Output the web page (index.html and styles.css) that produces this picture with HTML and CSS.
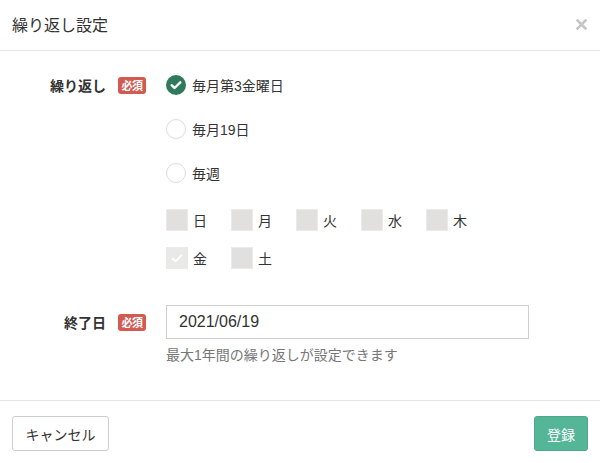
FILE: index.html
```html
<!DOCTYPE html>
<html lang="ja">
<head>
<meta charset="utf-8">
<title>繰り返し設定</title>
<link rel="stylesheet" href="styles.css">
</head>
<body>
<div class="modal">
  <div class="modal-header">
    <h1 class="modal-title">繰り返し設定</h1>
    <button class="close" aria-label="閉じる">
      <svg width="11" height="11" viewBox="0 0 11 11"><path d="M1.5 1.5 L9.5 9.5 M9.5 1.5 L1.5 9.5" stroke="#c6c6c6" stroke-width="2.6" stroke-linecap="square" fill="none"/></svg>
    </button>
  </div>
  <div class="modal-body">
    <div class="form-row repeat-row">
      <div class="label-cell label-top"><span class="label-text">繰り返し</span><span class="badge">必須</span></div>
      <div class="control-cell">
        <div class="radio-row">
          <span class="radio checked">
            <svg width="20" height="20" viewBox="0 0 20 20"><circle cx="10" cy="10" r="10" fill="#2f7a5b"/><path d="M5.6 10.2 L8.6 13 L14.3 7.3" stroke="#fff" stroke-width="2.4" fill="none" stroke-linecap="round" stroke-linejoin="round"/></svg>
          </span>
          <span class="opt-text">毎月第3金曜日</span>
        </div>
        <div class="radio-row">
          <span class="radio"></span>
          <span class="opt-text">毎月19日</span>
        </div>
        <div class="radio-row">
          <span class="radio"></span>
          <span class="opt-text">毎週</span>
        </div>
        <div class="days">
          <div class="day-line">
            <label class="day"><span class="box"></span><span>日</span></label>
            <label class="day"><span class="box"></span><span>月</span></label>
            <label class="day"><span class="box"></span><span>火</span></label>
            <label class="day"><span class="box"></span><span>水</span></label>
            <label class="day"><span class="box"></span><span>木</span></label>
          </div>
          <div class="day-line">
            <label class="day"><span class="box checked"><svg width="22" height="22" viewBox="0 0 22 22"><path d="M6.5 11.5 L9.6 14.3 L15.5 8.4" stroke="#fff" stroke-width="1.8" fill="none" stroke-linecap="round" stroke-linejoin="round"/></svg></span><span>金</span></label>
            <label class="day"><span class="box"></span><span>土</span></label>
          </div>
        </div>
      </div>
    </div>
    <div class="form-row end-row">
      <div class="label-cell label-mid"><span class="label-text">終了日</span><span class="badge">必須</span></div>
      <div class="control-cell">
        <input class="date-input" type="text" value="2021/06/19">
        <p class="help">最大1年間の繰り返しが設定できます</p>
      </div>
    </div>
  </div>
  <div class="modal-footer">
    <button class="btn btn-default">キャンセル</button>
    <button class="btn btn-primary">登録</button>
  </div>
</div>
</body>
</html>
```
FILE: styles.css
```css
* { box-sizing: border-box; }
html, body { margin: 0; padding: 0; background: #fff; }
body {
  font-family: "Liberation Sans", "Noto Sans CJK JP", sans-serif;
  color: #333;
  font-size: 14px;
  width: 600px;
  height: 463px;
  overflow: hidden;
}
.modal { width: 600px; height: 463px; display: flex; flex-direction: column; }
.modal-header {
  height: 51px;
  border-bottom: 1px solid #e5e5e5;
  display: flex;
  align-items: center;
  justify-content: space-between;
  padding: 2px 13px 0 12px;
}
.modal-title { margin: 0; font-size: 16px; font-weight: normal; line-height: 20px; color: #333; }
.close { border: 0; background: none; padding: 0; margin: 0 0 3px 0; display: flex; cursor: pointer; }

.modal-body { height: 350px; border-bottom: 1px solid #e5e5e5; padding-top: 12px; }
.form-row { display: flex; }
.label-cell {
  width: 146px;
  margin-right: 20px;
  display: flex;
  justify-content: flex-end;
  align-items: center;
}
.label-top { height: 44px; }
.label-mid { height: 34px; }
.label-text { font-weight: bold; font-size: 14px; color: #333; margin-right: 12px; }
.badge {
  display: inline-flex;
  align-items: center;
  justify-content: center;
  width: 28px;
  height: 17px;
  background: #d25a50;
  color: #fff;
  font-size: 11px;
  font-weight: bold;
  border-radius: 3px;
  letter-spacing: -0.5px;
}
.control-cell { flex: 1; }
.radio-row { height: 44px; display: flex; align-items: center; }
.radio {
  width: 20px; height: 20px; border-radius: 50%;
  border: 1.5px solid #dcdcd6;
  background: #fff;
  margin-right: 6px;
  display: inline-flex;
}
.radio.checked { border: 0; }
.opt-text { font-size: 14px; color: #333; }
.days { margin-top: 14px; }
.day-line { display: flex; height: 22px; margin-bottom: 16px; }
.day-line:last-child { margin-bottom: 0; }
.day { width: 65px; display: flex; align-items: center; font-size: 14px; color: #333; }
.box {
  width: 22px; height: 22px;
  background: #e1e0df;
  border: 1px solid #eaeaea;
  margin-right: 5px;
  display: inline-flex;
}
.box.checked { background: #e9e9e7; border: 0; }
.end-row { margin-top: 36px; }
.date-input {
  display: block;
  width: 363px; height: 34px;
  border: 1px solid #cfcfcf;
  padding: 0 12px;
  font-family: "Liberation Sans", "Noto Sans CJK JP", sans-serif;
  font-size: 16px;
  color: #333;
  outline: none;
}
.help { margin: 6px 0 0; font-size: 14px; line-height: 20px; color: #777; }

.modal-footer {
  flex: 1;
  display: flex;
  justify-content: space-between;
  align-items: flex-start;
  padding: 15px 12px 0 12px;
}
.btn {
  height: 35px;
  font-family: "Liberation Sans", "Noto Sans CJK JP", sans-serif;
  font-size: 14px;
  border-radius: 3px;
  padding: 0 12px;
  cursor: pointer;
}
.btn-default { width: 97px; background: #fff; border: 1px solid #ccc; color: #333; }
.btn-primary { width: 54px; background: #55b597; border: 1px solid #4aa98b; color: #fff; padding: 0; }
```
